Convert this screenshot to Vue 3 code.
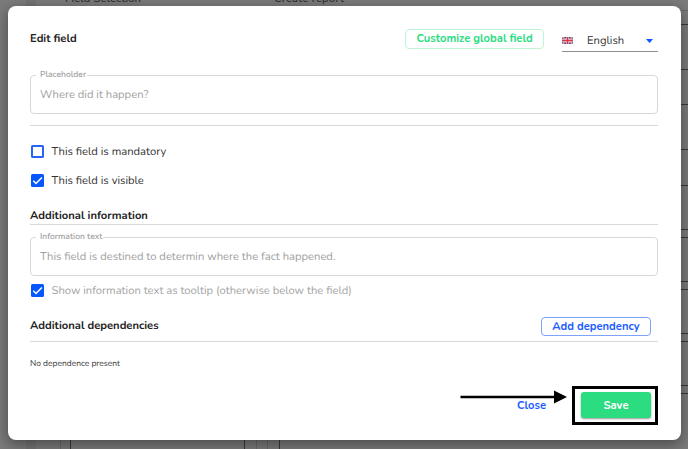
<script setup>
import { ref } from 'vue'

const language = ref('English')
const mandatory = ref(false)
const visible = ref(true)
const tooltip = ref(true)

// row borders of the page behind the dialog
const rowLines = [24, 69, 104, 149, 185, 229, 237, 281, 289, 333, 341, 385, 393]
</script>

<template>
  <div class="page">
    <!-- Page behind the overlay -->
    <svg class="backdrop" width="688" height="449" viewBox="0 0 688 449" aria-hidden="true">
      <rect width="688" height="449" fill="#7b7b7b" />
      <rect x="26" width="10" height="449" fill="#747474" />
      <path d="M60.5 430V449M256.5 430V449M267.5 430V449M681 10.5H688" stroke="#6a6a6a" />
      <path d="M70.5 430V449M244.5 430V449M279.5 430V449" stroke="#383838" />
      <path v-for="y in rowLines" :key="y" :d="`M676 ${y + .5}H688`" stroke="#383838" />
      <text class="bg-title" x="65" y="1.5" textLength="76">Field Selection</text>
      <text class="bg-title" x="274" y="1.5" textLength="70">Create report</text>
    </svg>

    <section class="dialog">
      <header class="head">
        <h2 class="title">Edit field</h2>
        <button class="outline-btn green">Customize global field</button>
        <div class="lang">
          <svg class="flag" width="11" height="7" viewBox="0 0 22 14">
            <rect width="22" height="14" fill="#34477f" />
            <path d="M0 0L22 14M22 0L0 14" stroke="#e3d9e5" stroke-width="3" />
            <path d="M0 0L22 14M22 0L0 14" stroke="#d64251" stroke-width="1.3" />
            <path d="M11 0V14M0 7H22" stroke="#f2e8ef" stroke-width="5" />
            <path d="M11 0V14M0 7H22" stroke="#dc3545" stroke-width="3" />
          </svg>
          <span class="lang-name">{{ language }}</span>
          <svg class="caret" width="7" height="4" viewBox="0 0 7 4"><path d="M0 0H7L3.5 4Z" fill="#0b57ff" /></svg>
        </div>
      </header>

      <fieldset class="field">
        <legend>Placeholder</legend>
        <span>Where did it happen?</span>
      </fieldset>
      <div class="rule" />

      <div class="check c1" @click="mandatory = !mandatory">
        <i :class="['box', mandatory && 'on']">
          <svg v-if="mandatory" viewBox="0 0 13 13"><path d="M2.3 6.8L5 9.5L10.9 3.4" /></svg>
        </i>
        <span>This field is mandatory</span>
      </div>
      <div class="check c2" @click="visible = !visible">
        <i :class="['box', visible && 'on']">
          <svg v-if="visible" viewBox="0 0 13 13"><path d="M2.3 6.8L5 9.5L10.9 3.4" /></svg>
        </i>
        <span>This field is visible</span>
      </div>

      <h2 class="title section">Additional information</h2>

      <fieldset class="field second">
        <legend>Information text</legend>
        <span>This field is destined to determin where the fact happened.</span>
      </fieldset>
      <div class="check c3 muted" @click="tooltip = !tooltip">
        <i :class="['box', tooltip && 'on']">
          <svg v-if="tooltip" viewBox="0 0 13 13"><path d="M2.3 6.8L5 9.5L10.9 3.4" /></svg>
        </i>
        <span>Show information text as tooltip (otherwise below the field)</span>
      </div>

      <div class="deps">
        <h2 class="title">Additional dependencies</h2>
        <button class="outline-btn blue">Add dependency</button>
      </div>
      <p class="empty">No dependence present</p>

      <footer class="foot">
        <button class="close">Close</button>
        <div class="marked"><button class="save">Save</button></div>
      </footer>

      <!-- Pointer to the save button -->
      <svg class="arrow" width="108" height="14" viewBox="0 0 108 14">
        <path d="M0.5 7H96" stroke="#000" stroke-width="2.6" />
        <path d="M94 0.5L107 7L94 13.5Z" fill="#000" />
      </svg>
    </section>
  </div>
</template>

<style>
body { margin:0; overflow:hidden; }
</style>

<style scoped>
* { box-sizing:border-box; }
.page { position:relative; width:688px; height:449px; padding:6px 7px; overflow:hidden; font-family:Nunito,Lato,"Open Sans",sans-serif; font-size:11.22px; color:#333; text-rendering:geometricPrecision; }
.page * { white-space:nowrap; }
.backdrop { position:absolute; left:0; top:0; }
.bg-title { font-size:11.2px; font-weight:600; fill:#333; }
button { font-family:inherit; cursor:pointer; padding:0; }
.dialog { position:relative; width:673.5px; height:434px; margin-left:.5px; background:#fff; border-radius:8px; padding:0 23px 0 22.5px; box-shadow:0 4px 14px 1px rgba(0,0,0,.38); }

.head { display:flex; align-items:flex-start; height:63px; padding-top:23px; }
.title { margin:0; font-size:11.2px; line-height:18px; font-weight:700; color:#222; }
.head .title { flex:1; line-height:19px; }
.outline-btn { height:19px; border-radius:4px; background:#fff; font-size:11.2px; font-weight:700; line-height:17px; }
.green { height:20px; line-height:18px; width:139px; margin-right:18px; color:#2bdc80; border:1px solid #bdf5d6; }
.blue { width:110px; color:#1b5cff; border:1px solid #7da2fb; }
.lang { display:flex; align-items:center; width:96px; height:23px; border-bottom:1px solid #8d8d8d; padding-right:5px; }
.flag { margin-right:14px; }
.lang-name { flex:1; }
.caret { margin-top:2px; }

.field { display:block; position:relative; width:628px; height:45px; margin:0; padding:0 9px; border:1px solid #d8d8d8; border-radius:4px; color:#a0a0a0; min-width:0; }
.field legend { margin-left:-4px; padding:0 1px 0 4px; font-size:8.5px; line-height:12px; height:12px; font-weight:600; color:#a0a0a0; }
.field span { display:block; line-height:16px; margin-top:6px; }
.rule { height:1px; margin-top:11px; background:#d8d8d8; }

.check { display:flex; align-items:center; height:14px; gap:8px; }
.c1 { margin-top:18px; }
.c2 { margin-top:15px; }
.c3 { margin-top:7px; }
.muted { color:#a4a4a4; }
.box { width:13px; height:13px; margin-left:.5px; border:1.5px solid #2864f5; border-radius:1.5px; display:flex; flex-shrink:0; }
.box.on { background:#0757ff; border:0; }
.box svg { width:13px; height:13px; fill:none; stroke:#fff; stroke-width:1.5; }
/* keeps the ring as heavy as the filled boxes */
.box:not(.on) { border-width:2px; }

.section { margin-top:20px; height:18px; border-bottom:1px solid #d8d8dd; }
.second { margin-top:6px; }
.deps { display:flex; justify-content:space-between; align-items:flex-start; height:25px; margin-top:20px; padding-right:7px; border-bottom:1px solid #d8d8dd; }
.empty { margin:15px 0 0; font-size:8.45px; line-height:12px; color:#333; }
.foot { display:flex; justify-content:flex-end; margin-top:17px; }
.close { border:0; background:none; color:#1b5cff; font-size:11.2px; font-weight:700; margin-right:26px; height:39px; }
.marked { width:86px; height:39px; border:3px solid #000; padding:3px 4px 0 6px; }
.save { display:block; width:70px; height:26px; border:0; border-radius:3px; background:#2bdc80; color:#fff; font-size:11.2px; font-weight:700; box-shadow:0 1px 2px rgba(0,0,0,.4); }
.arrow { position:absolute; left:452.5px; top:383.5px; }
</style>
